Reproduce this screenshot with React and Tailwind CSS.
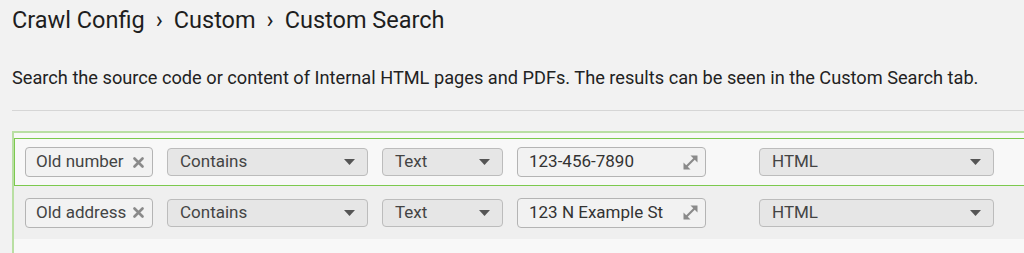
import React from 'react';

const Caret = () => (
  <svg width="11" height="6" viewBox="0 0 11 6" className="shrink-0">
    <path d="M0 0h11L5.5 6z" fill="#555" />
  </svg>
);

const XMark = () => (
  <svg width="11" height="11" viewBox="0 0 11 11" className="shrink-0">
    <path d="M1.5 1.5l8 8M9.5 1.5l-8 8" stroke="#8a8a8a" strokeWidth="2.6" strokeLinecap="round" />
  </svg>
);

const Expand = () => (
  <svg width="17" height="17" viewBox="0 0 17 17" className="shrink-0">
    <path d="M4 13L13 4" stroke="#8a8a8a" strokeWidth="2.2" />
    <path d="M8.5 1.5h7v7z" fill="#8a8a8a" />
    <path d="M1.5 8.5v7h7z" fill="#8a8a8a" />
  </svg>
);

function Chip({ label }) {
  return (
    <div className="flex items-center justify-between w-[128px] h-[30px] pl-[10px] pr-[8px] rounded-[4px] border border-[#b4b4b4] bg-[#f2f2f2] text-[#444]">
      <span>{label}</span>
      <XMark />
    </div>
  );
}

function Select({ value, width }) {
  return (
    <div
      className={`flex items-center justify-between h-[28px] pl-[12px] pr-[12px] rounded-[4px] border border-[#bcbcbc] bg-[#e6e6e6] text-[#444] ${width}`}
    >
      <span>{value}</span>
      <Caret />
    </div>
  );
}

function TextBox({ value }) {
  return (
    <div className="flex items-center justify-between w-[189px] h-[30px] pl-[11px] pr-[6px] rounded-[4px] border border-[#b4b4b4] bg-[#f2f2f2] text-[#333]">
      <span>{value}</span>
      <Expand />
    </div>
  );
}

function Row({ label, value, selected }) {
  return (
    <div
      className={
        selected
          ? 'flex items-center h-[48px] pl-[10px] border border-[#7cc94e] bg-[#f8f8f8]'
          : 'flex items-center h-[53px] pl-[11px] bg-[#efefef]'
      }
    >
      <Chip label={label} />
      <div className="ml-[14px]">
        <Select value="Contains" width="w-[201px]" />
      </div>
      <div className="ml-[14px]">
        <Select value="Text" width="w-[121px]" />
      </div>
      <div className="ml-[14px]">
        <TextBox value={value} />
      </div>
      <div className="ml-[53px]">
        <Select value="HTML" width="w-[235px]" />
      </div>
    </div>
  );
}

export default function App() {
  return (
    <div
      className="w-[1024px] h-[253px] overflow-hidden bg-[#f2f2f2] pl-[12px] text-[17px]"
      style={{ fontFamily: 'Roboto, "Liberation Sans", sans-serif' }}
    >
      <div className="pt-[5px] h-[58px] text-[23.5px] text-[#1e1e1e] leading-[30px] flex gap-[11px]">
        <span>Crawl Config</span>
        <span>›</span>
        <span>Custom</span>
        <span>›</span>
        <span>Custom Search</span>
      </div>
      <p className="text-[18.2px] text-[#222] leading-[24px] mt-[8px]">
        Search the source code or content of Internal HTML pages and PDFs. The results can be seen in the Custom Search tab.
      </p>
      <div className="mt-[20px] h-px bg-[#d6d6d6]" />
      <div className="mt-[20px] w-[1040px] border-l-2 border-t-2 border-[#b9dfa3] bg-[#f8f8f8] pt-[5px] h-[130px]">
        <Row label="Old number" value="123-456-7890" selected />
        <Row label="Old address" value="123 N Example St" />
      </div>
    </div>
  );
}
